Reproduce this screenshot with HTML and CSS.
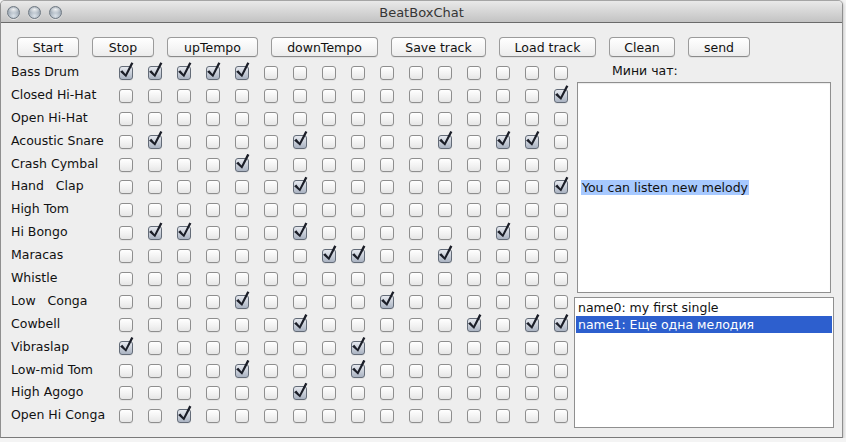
FILE: index.html
```html
<!DOCTYPE html>
<html>
<head>
<meta charset="utf-8">
<title>BeatBoxChat</title>
<link rel="stylesheet" href="styles.css">
</head>
<body>
<div class="window">
  <div class="titlebar">
    <div class="lights"><span class="light"></span><span class="light"></span><span class="light"></span></div>
    <div class="title">BeatBoxChat</div>
    <div></div>
  </div>
  <div class="toolbar">
    <div class="btn b-start">Start</div>
    <div class="btn b-stop">Stop</div>
    <div class="btn b-up">upTempo</div>
    <div class="btn b-down">downTempo</div>
    <div class="btn b-save">Save track</div>
    <div class="btn b-load">Load track</div>
    <div class="btn b-clean">Clean</div>
    <div class="btn b-send">send</div>
  </div>
  <div class="main">
    <div class="labels">
      <div>Bass Drum</div>
      <div>Closed Hi-Hat</div>
      <div>Open Hi-Hat</div>
      <div>Acoustic Snare</div>
      <div>Crash Cymbal</div>
      <div>Hand   Clap</div>
      <div>High Tom</div>
      <div>Hi Bongo</div>
      <div>Maracas</div>
      <div>Whistle</div>
      <div>Low   Conga</div>
      <div>Cowbell</div>
      <div>Vibraslap</div>
      <div>Low-mid Tom</div>
      <div>High Agogo</div>
      <div>Open Hi Conga</div>
    </div>
    <div class="grid">
      <i class="on"></i><i class="on"></i><i class="on"></i><i class="on"></i><i class="on"></i><i></i><i></i><i></i><i></i><i></i><i></i><i></i><i></i><i></i><i></i><i></i>
      <i></i><i></i><i></i><i></i><i></i><i></i><i></i><i></i><i></i><i></i><i></i><i></i><i></i><i></i><i></i><i class="on"></i>
      <i></i><i></i><i></i><i></i><i></i><i></i><i></i><i></i><i></i><i></i><i></i><i></i><i></i><i></i><i></i><i></i>
      <i></i><i class="on"></i><i></i><i></i><i></i><i></i><i class="on"></i><i></i><i></i><i></i><i></i><i class="on"></i><i></i><i class="on"></i><i class="on"></i><i></i>
      <i></i><i></i><i></i><i></i><i class="on"></i><i></i><i></i><i></i><i></i><i></i><i></i><i></i><i></i><i></i><i></i><i></i>
      <i></i><i></i><i></i><i></i><i></i><i></i><i class="on"></i><i></i><i></i><i></i><i></i><i></i><i></i><i></i><i></i><i class="on"></i>
      <i></i><i></i><i></i><i></i><i></i><i></i><i></i><i></i><i></i><i></i><i></i><i></i><i></i><i></i><i></i><i></i>
      <i></i><i class="on"></i><i class="on"></i><i></i><i></i><i></i><i class="on"></i><i></i><i></i><i></i><i></i><i></i><i></i><i class="on"></i><i></i><i></i>
      <i></i><i></i><i></i><i></i><i></i><i></i><i></i><i class="on"></i><i class="on"></i><i></i><i></i><i class="on"></i><i></i><i></i><i></i><i></i>
      <i></i><i></i><i></i><i></i><i></i><i></i><i></i><i></i><i></i><i></i><i></i><i></i><i></i><i></i><i></i><i></i>
      <i></i><i></i><i></i><i></i><i class="on"></i><i></i><i></i><i></i><i></i><i class="on"></i><i></i><i></i><i></i><i></i><i></i><i></i>
      <i></i><i></i><i></i><i></i><i></i><i></i><i class="on"></i><i></i><i></i><i></i><i></i><i></i><i class="on"></i><i></i><i class="on"></i><i class="on"></i>
      <i class="on"></i><i></i><i></i><i></i><i></i><i></i><i></i><i></i><i class="on"></i><i></i><i></i><i></i><i></i><i></i><i></i><i></i>
      <i></i><i></i><i></i><i></i><i class="on"></i><i></i><i></i><i></i><i class="on"></i><i></i><i></i><i></i><i></i><i></i><i></i><i></i>
      <i></i><i></i><i></i><i></i><i></i><i></i><i class="on"></i><i></i><i></i><i></i><i></i><i></i><i></i><i></i><i></i><i></i>
      <i></i><i></i><i class="on"></i><i></i><i></i><i></i><i></i><i></i><i></i><i></i><i></i><i></i><i></i><i></i><i></i><i></i>
    </div>
    <div class="side">
      <div class="chat-label">Мини чат:</div>
      <div class="chat"><span class="hl">You can listen new melody</span></div>
      <div class="list">
        <div class="item">name0: my first single</div>
        <div class="item sel">name1: Еще одна мелодия</div>
      </div>
    </div>
  </div>
</div>
</body>
</html>
```

FILE: styles.css
```css
html, body {
  margin: 0;
  padding: 0;
  background: #f4f4f4;
}

body {
  font-family: "DejaVu Sans", "Noto Sans", sans-serif;
  font-size: 12.5px;
  color: #111;
}

.window {
  width: 843px;
  height: 438px;
  box-sizing: border-box;
  border: 1px solid #8f8f8f;
  border-top-color: #a5a5a5;
  border-bottom-color: #7a7a7a;
  border-radius: 5px 5px 0 0;
  background: #eeeeee;
  display: flex;
  flex-direction: column;
  overflow: hidden;
  box-shadow: 1px 1px 3px rgba(0, 0, 0, 0.18);
}

.titlebar {
  height: 21px;
  flex: none;
  border-bottom: 1px solid #6a6a6a;
  background: linear-gradient(#e9e9e9, #c3c3c3);
  display: grid;
  grid-template-columns: 1fr auto 1fr;
  align-items: center;
}

.lights {
  display: flex;
  gap: 8px;
  padding-left: 6px;
  margin-top: 2px;
}

.light {
  width: 13px;
  height: 13px;
  box-sizing: border-box;
  border-radius: 50%;
  border: 1px solid #6e7882;
  background:
    radial-gradient(ellipse 60% 35% at 50% 22%, rgba(255,255,255,0.85), rgba(255,255,255,0) 100%),
    radial-gradient(circle at 50% 80%, #dbe2e9 0%, #a4afba 55%, #7d8a97 100%);
  box-shadow: 0 1px 0 rgba(255,255,255,0.5);
}

.title {
  font-size: 13px;
  color: #353535;
  padding-top: 1px;
}

.toolbar {
  display: flex;
  gap: 13px;
  padding: 14px 0 0 16px;
}

.btn {
  height: 20px;
  box-sizing: border-box;
  border: 1px solid #9b9b9b;
  border-bottom-color: #8a8a8a;
  border-radius: 4px;
  background: linear-gradient(#ffffff 0%, #f6f6f6 50%, #ececec 100%);
  box-shadow: 0 1px 0 rgba(0, 0, 0, 0.06);
  display: flex;
  align-items: center;
  justify-content: center;
  color: #111;
}

.b-start { width: 62px; }
.b-stop { width: 62px; }
.b-up { width: 91px; }
.b-down { width: 107px; }
.b-save { width: 95px; }
.b-load { width: 97px; }
.b-clean { width: 66px; }
.b-send { width: 62px; }

.main {
  display: flex;
  margin-top: 3px;
  padding-left: 10px;
}

.labels {
  width: 100px;
  display: grid;
  grid-auto-rows: 22.9px;
  align-items: center;
  white-space: pre;
}

.grid {
  display: grid;
  grid-template-columns: repeat(16, 29px);
  grid-auto-rows: 22.9px;
  place-items: center;
}

.grid i {
  display: block;
  position: relative;
  width: 14px;
  height: 14px;
  margin-top: 3px;
  box-sizing: border-box;
  border: 1px solid #8e8e8e;
  border-radius: 3px;
  background: linear-gradient(#ffffff, #f1f1f1 60%, #e6e6e6);
  box-shadow: 0 1px 0 rgba(0, 0, 0, 0.05);
}

.grid i.on {
  border-color: #636b77;
  background: linear-gradient(#e6e9ef, #c9cfd9 50%, #aab3c2);
}

.grid i.on::after {
  content: "";
  position: absolute;
  left: -1px;
  top: -5px;
  width: 17px;
  height: 17px;
  background: #1b1e28;
  clip-path: polygon(1.6px 9.8px, 3.8px 8.2px, 7px 12px, 12.8px 0.3px, 14.9px 1.4px, 7.6px 15.2px);
}

.side {
  width: 260px;
  margin-left: -1px;
  display: flex;
  flex-direction: column;
}

.chat-label {
  height: 22px;
  line-height: 21px;
  padding-left: 38px;
}

.chat {
  margin-left: 3px;
  width: 254px;
  height: 211px;
  box-sizing: border-box;
  border: 1px solid #8f8f8f;
  background: #ffffff;
  display: flex;
  align-items: center;
  padding: 0 3px;
  box-shadow: inset 0 1px 1px rgba(0, 0, 0, 0.08);
}

.hl {
  background: #a7c9ff;
  line-height: 15px;
  padding: 0 1px;
}

.list {
  margin-top: 4px;
  width: 260px;
  height: 131px;
  box-sizing: border-box;
  border: 1px solid #8f8f8f;
  background: #ffffff;
  padding: 1px;
}

.item {
  height: 17px;
  line-height: 17px;
  padding-left: 2px;
  white-space: nowrap;
}

.item.sel {
  background: #2d5fce;
  color: #ffffff;
}
```
